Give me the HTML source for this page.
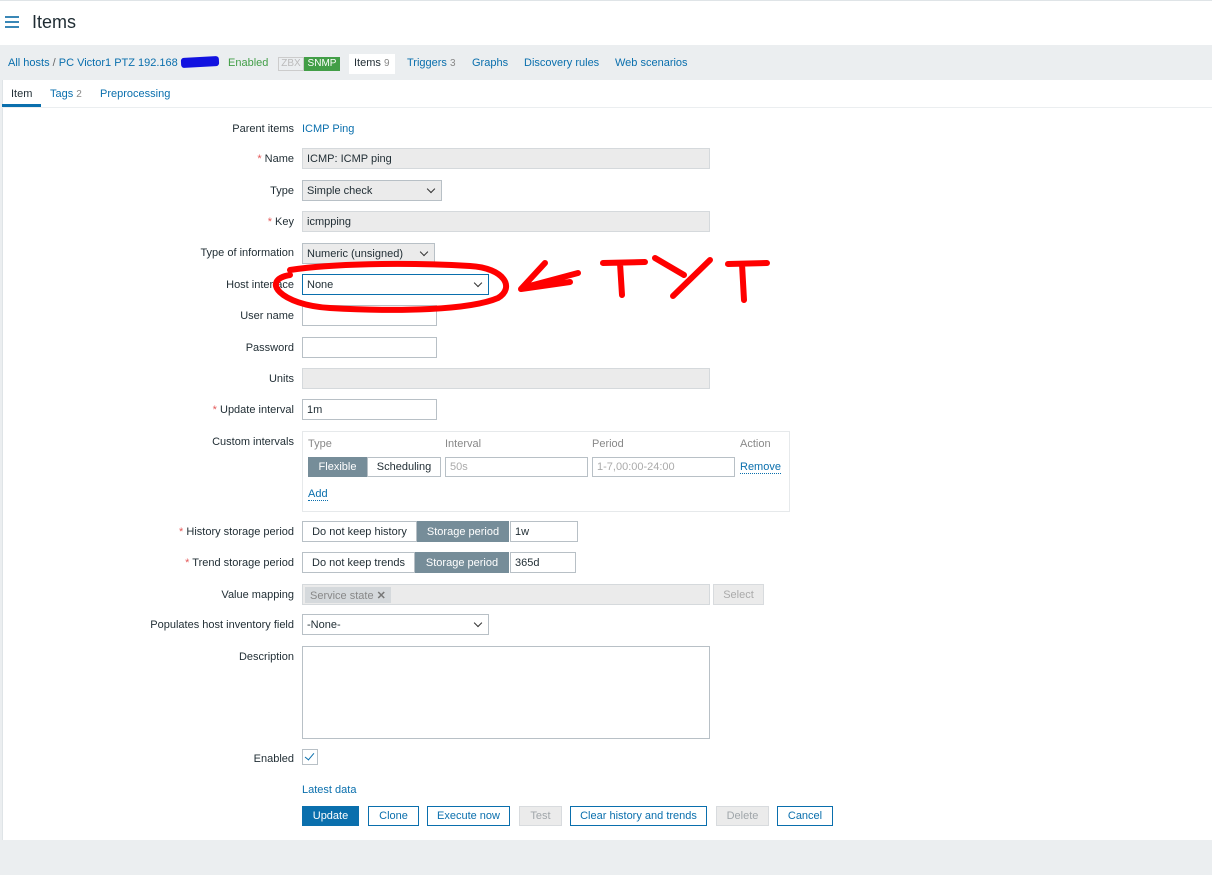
<!DOCTYPE html>
<html><head><meta charset="utf-8"><style>
*{box-sizing:border-box;margin:0;padding:0}
body{width:1212px;height:875px;position:relative;background:#ebeef0;font-family:"Liberation Sans",Arial,sans-serif;font-size:11px;color:#1f2c33;overflow:hidden}
.a{position:absolute}
.top{left:0;top:0;width:1212px;height:45px;background:#fff;border-top:1px solid #dfe4e7}
.lbl{position:absolute;right:918px;text-align:right;white-space:nowrap;margin-top:1px}
.req::before{content:"* ";color:#e45959}
.in{position:absolute;left:302px;height:21px;border:1px solid #b8c0c6;background:#fff;padding:4px 4px 2px;white-space:nowrap}
.ro{background:#ebebeb;border-color:#d5d9dc}
.sel::after{content:"";position:absolute;right:7px;top:5px;width:5px;height:5px;border-right:1px solid #333;border-bottom:1px solid #333;transform:rotate(45deg)}
.lnk{color:#0a6fad}
.btn{position:absolute;top:806px;height:20px;border:1px solid #0a6fad;color:#0a6fad;background:#fff;text-align:center;line-height:19px}
.dis{border-color:#d8dbde;background:#ebebeb;color:#a0a6aa}
</style></head><body>
<div class="a top"></div>
<div class="a" style="left:5px;top:16px;width:14px;height:2px;background:#3a87b6;box-shadow:0 5px 0 #3a87b6,0 10px 0 #3a87b6"></div>
<div class="a" style="left:32px;top:12px;font-size:18px;color:#1f2c33">Items</div>
<div class="a" style="left:0;top:45px;width:1212px;height:35px;background:#ebeef0"></div>
<div class="a" style="left:8px;top:57px;white-space:nowrap"><span class="lnk">All hosts</span> <span style="color:#666">/</span> <span class="lnk">PC Victor1 PTZ 192.168</span></div>
<div class="a" style="left:181px;top:57px;width:38px;height:10px;background:#1212e0;border-radius:3px;transform:rotate(-3deg)"></div>
<div class="a" style="left:228px;top:57px;color:#429e47">Enabled</div>
<div class="a" style="left:278px;top:57px;width:26px;height:14px;border:1px solid #ccc;color:#bbb;font-size:10px;text-align:center;line-height:12px">ZBX</div>
<div class="a" style="left:304px;top:57px;width:36px;height:14px;background:#429e47;color:#fff;font-size:10px;text-align:center;line-height:14px">SNMP</div>
<div class="a" style="left:349px;top:54px;width:46px;height:20px;background:#fff;padding:3px 5px;white-space:nowrap">Items <span style="color:#888;font-size:10px">9</span></div>
<div class="a lnk" style="left:407px;top:57px">Triggers <span style="color:#888;font-size:10px">3</span></div>
<div class="a lnk" style="left:472px;top:57px">Graphs</div>
<div class="a lnk" style="left:524px;top:57px">Discovery rules</div>
<div class="a lnk" style="left:615px;top:57px">Web scenarios</div>
<div class="a" style="left:2px;top:80px;width:1210px;height:760px;background:#fff;border-left:1px solid #dfe4e7"></div>
<div class="a" style="left:2px;top:107px;width:1210px;height:1px;background:#ebeef0"></div>
<div class="a" style="left:11px;top:88px">Item</div>
<div class="a" style="left:2px;top:104px;width:39px;height:3px;background:#0a6fad"></div>
<div class="a lnk" style="left:50px;top:88px">Tags <span style="color:#888;font-size:10px">2</span></div>
<div class="a lnk" style="left:100px;top:88px">Preprocessing</div>

<div class="lbl" style="top:122px">Parent items</div><div class="a lnk" style="left:302px;top:123px">ICMP Ping</div>
<div class="lbl req" style="top:152px">Name</div><div class="in ro" style="top:148px;width:408px">ICMP: ICMP ping</div>
<div class="lbl" style="top:184px">Type</div><div class="in sel" style="top:180px;width:140px;background:#ebebeb">Simple check</div>
<div class="lbl req" style="top:215px">Key</div><div class="in ro" style="top:211px;width:408px">icmpping</div>
<div class="lbl" style="top:246px">Type of information</div><div class="in sel" style="top:243px;width:133px;background:#ebebeb">Numeric (unsigned)</div>
<div class="lbl" style="top:278px">Host interface</div><div class="in sel" style="top:274px;width:187px;border-color:#0a6fad">None</div>
<div class="lbl" style="top:309px">User name</div><div class="in" style="top:305px;width:135px"></div>
<div class="lbl" style="top:341px">Password</div><div class="in" style="top:337px;width:135px"></div>
<div class="lbl" style="top:372px">Units</div><div class="in ro" style="top:368px;width:408px"></div>
<div class="lbl req" style="top:403px">Update interval</div><div class="in" style="top:399px;width:135px">1m</div>
<div class="lbl" style="top:435px">Custom intervals</div>
<div class="a" style="left:302px;top:431px;width:488px;height:81px;border:1px solid #e6e9eb"></div>
<div class="a" style="left:308px;top:438px;color:#888">Type</div>
<div class="a" style="left:445px;top:438px;color:#888">Interval</div>
<div class="a" style="left:592px;top:438px;color:#888">Period</div>
<div class="a" style="left:740px;top:438px;color:#888">Action</div>
<div class="a" style="left:308px;top:457px;width:59px;height:20px;background:#768d99;color:#fff;text-align:center;line-height:20px">Flexible</div>
<div class="a" style="left:367px;top:457px;width:74px;height:20px;border:1px solid #b8c0c6;text-align:center;line-height:18px">Scheduling</div>
<div class="in" style="left:445px;top:457px;width:143px;height:20px;color:#aaa;padding:3px 4px">50s</div>
<div class="in" style="left:592px;top:457px;width:143px;height:20px;color:#aaa;padding:3px 4px">1-7,00:00-24:00</div>
<div class="a lnk" style="left:740px;top:461px;border-bottom:1px dotted #0a6fad">Remove</div>
<div class="a lnk" style="left:308px;top:488px;border-bottom:1px dotted #0a6fad">Add</div>

<div class="lbl req" style="top:525px">History storage period</div>
<div class="a" style="left:302px;top:521px;width:115px;height:21px;border:1px solid #b8c0c6;text-align:center;line-height:20px">Do not keep history</div>
<div class="a" style="left:417px;top:521px;width:92px;height:21px;background:#768d99;color:#fff;text-align:center;line-height:22px">Storage period</div>
<div class="in" style="left:510px;top:521px;width:68px">1w</div>
<div class="lbl req" style="top:556px">Trend storage period</div>
<div class="a" style="left:302px;top:552px;width:113px;height:21px;border:1px solid #b8c0c6;text-align:center;line-height:20px">Do not keep trends</div>
<div class="a" style="left:415px;top:552px;width:94px;height:21px;background:#768d99;color:#fff;text-align:center;line-height:22px">Storage period</div>
<div class="in" style="left:510px;top:552px;width:66px">365d</div>
<div class="lbl" style="top:588px">Value mapping</div>
<div class="in ro" style="top:584px;width:408px;padding:2px 2px"><span style="background:#d5d9dc;color:#888;padding:2px 5px 1px;display:inline-block">Service state <b style="color:#777">✕</b></span></div>
<div class="a dis" style="left:713px;top:584px;width:51px;height:21px;border:1px solid #d8dbde;text-align:center;line-height:20px;color:#aaa;background:#ebebeb">Select</div>
<div class="lbl" style="top:618px">Populates host inventory field</div><div class="in sel" style="top:614px;width:187px">-None-</div>
<div class="lbl" style="top:650px">Description</div><div class="in" style="top:646px;width:408px;height:93px"></div>
<div class="lbl" style="top:752px">Enabled</div>
<div class="a" style="left:302px;top:749px;width:16px;height:16px;border:1px solid #b8c0c6"></div>
<div class="a" style="left:307px;top:751px;width:5px;height:9px;border-right:1px solid #0a6fad;border-bottom:1px solid #0a6fad;transform:rotate(40deg)"></div>
<div class="a lnk" style="left:302px;top:784px">Latest data</div>
<div class="btn" style="left:302px;width:57px;background:#0a6fad;color:#fff">Update</div>
<div class="btn" style="left:368px;width:51px">Clone</div>
<div class="btn" style="left:427px;width:83px">Execute now</div>
<div class="btn dis" style="left:519px;width:43px">Test</div>
<div class="btn" style="left:570px;width:137px">Clear history and trends</div>
<div class="btn dis" style="left:716px;width:53px">Delete</div>
<div class="btn" style="left:777px;width:56px">Cancel</div>

<svg class="a" style="left:0;top:0" width="1212" height="875"><g fill="none" stroke="#f00" stroke-width="6" stroke-linecap="round" stroke-linejoin="round">
<path d="M290 275 C260 280 280 305 330 308 C400 312 470 310 498 298 C515 288 505 268 470 266 C400 262 330 264 290 270"/>
<path d="M545 263 L521 289 L570 282 M522 288 L578 273"/>
<path d="M603 263 L645 262 M620 263 L622 295"/>
<path d="M655 258 L684 275 M710 260 L673 296"/>
<path d="M728 264 L767 263 M742 264 L744 300"/>
</g></svg>
</body></html>
